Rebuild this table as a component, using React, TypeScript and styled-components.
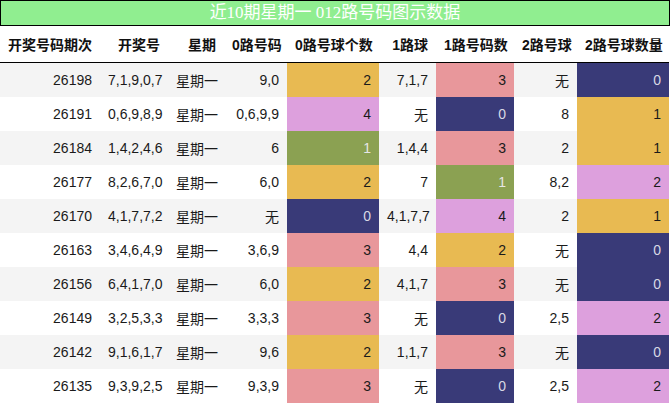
import React from "react";
import styled, { createGlobalStyle } from "styled-components";

const GlobalStyle = createGlobalStyle`
  html, body { margin: 0; padding: 0; background: #fff; }
  body { font-family: "Liberation Sans", "Noto Sans CJK SC", sans-serif; }
`;

type Tone = "Y" | "P" | "G" | "N" | "S";

const toneBg: Record<Tone, string> = {
  Y: "#e8ba52",
  P: "#dda0dd",
  G: "#8ba152",
  N: "#393a78",
  S: "#e8979b",
};
const toneFg: Record<Tone, string> = {
  Y: "#1a1a1a",
  P: "#1a1a1a",
  G: "#e6e6e6",
  N: "#d8d8e4",
  S: "#1a1a1a",
};

const Wrapper = styled.div`
  width: 670px;
`;

const Title = styled.div`
  box-sizing: border-box;
  height: 26px;
  width: 670px;
  border: 1px solid #000;
  background: #90ee90;
  color: #fff;
  font-family: "Liberation Serif", "Noto Sans CJK SC", serif;
  font-size: 17px;
  line-height: 24px;
  text-align: center;
  white-space: nowrap;
`;

const Table = styled.table`
  width: 669px;
  border-collapse: collapse;
  table-layout: fixed;
  font-size: 14px;
  color: #1a1a1a;
`;

const HeadCell = styled.th`
  height: 36px;
  padding: 0 8px;
  text-align: right;
  font-weight: bold;
  white-space: nowrap;
  border-bottom: 1px solid #000;
  background: #fff;
  color: #111;
`;

const Row = styled.tr<{ $alt: boolean }>`
  background: ${(p) => (p.$alt ? "#f4f4f4" : "#ffffff")};
`;

const Cell = styled.td<{ $tone?: Tone }>`
  height: 34px;
  padding: 0 8px;
  text-align: right;
  white-space: nowrap;
  background: ${(p) => (p.$tone ? toneBg[p.$tone] : "transparent")};
  color: ${(p) => (p.$tone ? toneFg[p.$tone] : "#1a1a1a")};
`;

const widths = [100, 68, 56, 63, 92, 57, 78, 63, 92];
const headers = ["开奖号码期次", "开奖号", "星期", "0路号码", "0路号球个数", "1路球", "1路号码数", "2路号球", "2路号球数量"];

type RowData = [string, string, string, string, number, Tone, string, number, Tone, string, number, Tone];

const rows: RowData[] = [
  ["26198", "7,1,9,0,7", "星期一", "9,0", 2, "Y", "7,1,7", 3, "S", "无", 0, "N"],
  ["26191", "0,6,9,8,9", "星期一", "0,6,9,9", 4, "P", "无", 0, "N", "8", 1, "Y"],
  ["26184", "1,4,2,4,6", "星期一", "6", 1, "G", "1,4,4", 3, "S", "2", 1, "Y"],
  ["26177", "8,2,6,7,0", "星期一", "6,0", 2, "Y", "7", 1, "G", "8,2", 2, "P"],
  ["26170", "4,1,7,7,2", "星期一", "无", 0, "N", "4,1,7,7", 4, "P", "2", 1, "Y"],
  ["26163", "3,4,6,4,9", "星期一", "3,6,9", 3, "S", "4,4", 2, "Y", "无", 0, "N"],
  ["26156", "6,4,1,7,0", "星期一", "6,0", 2, "Y", "4,1,7", 3, "S", "无", 0, "N"],
  ["26149", "3,2,5,3,3", "星期一", "3,3,3", 3, "S", "无", 0, "N", "2,5", 2, "P"],
  ["26142", "9,1,6,1,7", "星期一", "9,6", 2, "Y", "1,1,7", 3, "S", "无", 0, "N"],
  ["26135", "9,3,9,2,5", "星期一", "9,3,9", 3, "S", "无", 0, "N", "2,5", 2, "P"],
];

export default function App() {
  return (
    <Wrapper>
      <GlobalStyle />
      <Title>近10期星期一 012路号码图示数据</Title>
      <Table>
        <colgroup>
          {widths.map((w, i) => (
            <col key={i} style={{ width: w }} />
          ))}
        </colgroup>
        <thead>
          <tr>
            {headers.map((h) => (
              <HeadCell key={h}>{h}</HeadCell>
            ))}
          </tr>
        </thead>
        <tbody>
          {rows.map((r, i) => (
            <Row key={r[0]} $alt={i % 2 === 0}>
              <Cell>{r[0]}</Cell>
              <Cell>{r[1]}</Cell>
              <Cell>{r[2]}</Cell>
              <Cell>{r[3]}</Cell>
              <Cell $tone={r[5]}>{r[4]}</Cell>
              <Cell>{r[6]}</Cell>
              <Cell $tone={r[8]}>{r[7]}</Cell>
              <Cell>{r[9]}</Cell>
              <Cell $tone={r[11]}>{r[10]}</Cell>
            </Row>
          ))}
        </tbody>
      </Table>
    </Wrapper>
  );
}
